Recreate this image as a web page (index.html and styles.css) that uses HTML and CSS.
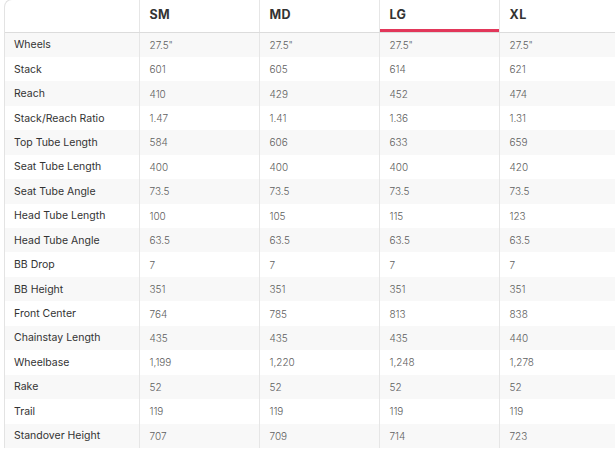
FILE: index.html
```html
<!DOCTYPE html>
<html>
<head>
<meta charset="utf-8">
<link rel="stylesheet" href="styles.css">
</head>
<body>
<div class="wrap">
<table class="geo">
<colgroup>
<col class="c-label"><col class="c-size"><col class="c-size"><col class="c-size"><col class="c-size">
</colgroup>
<thead>
<tr><th></th><th>SM</th><th>MD</th><th class="active">LG</th><th>XL</th></tr>
</thead>
<tbody>
<tr><td>Wheels</td><td>27.5"</td><td>27.5"</td><td>27.5"</td><td>27.5"</td></tr>
<tr><td>Stack</td><td>601</td><td>605</td><td>614</td><td>621</td></tr>
<tr><td>Reach</td><td>410</td><td>429</td><td>452</td><td>474</td></tr>
<tr><td>Stack/Reach Ratio</td><td>1.47</td><td>1.41</td><td>1.36</td><td>1.31</td></tr>
<tr><td>Top Tube Length</td><td>584</td><td>606</td><td>633</td><td>659</td></tr>
<tr><td>Seat Tube Length</td><td>400</td><td>400</td><td>400</td><td>420</td></tr>
<tr><td>Seat Tube Angle</td><td>73.5</td><td>73.5</td><td>73.5</td><td>73.5</td></tr>
<tr><td>Head Tube Length</td><td>100</td><td>105</td><td>115</td><td>123</td></tr>
<tr><td>Head Tube Angle</td><td>63.5</td><td>63.5</td><td>63.5</td><td>63.5</td></tr>
<tr><td>BB Drop</td><td>7</td><td>7</td><td>7</td><td>7</td></tr>
<tr><td>BB Height</td><td>351</td><td>351</td><td>351</td><td>351</td></tr>
<tr><td>Front Center</td><td>764</td><td>785</td><td>813</td><td>838</td></tr>
<tr><td>Chainstay Length</td><td>435</td><td>435</td><td>435</td><td>440</td></tr>
<tr><td>Wheelbase</td><td>1,199</td><td>1,220</td><td>1,248</td><td>1,278</td></tr>
<tr><td>Rake</td><td>52</td><td>52</td><td>52</td><td>52</td></tr>
<tr><td>Trail</td><td>119</td><td>119</td><td>119</td><td>119</td></tr>
<tr><td>Standover Height</td><td>707</td><td>709</td><td>714</td><td>723</td></tr>
</tbody>
</table>
</div>
</body>
</html>
```
FILE: styles.css
```css
html, body {
  margin: 0;
  padding: 0;
  overflow: hidden;
  background: #fff;
}
.wrap {
  margin: -1px 0 0 4px;
  width: 640px;
  border-left: 1px solid #e3e3e3;
  border-top: 1px solid #e3e3e3;
  border-top-left-radius: 8px;
  overflow: hidden;
}
.geo {
  border-collapse: collapse;
  table-layout: fixed;
  width: 614px;
  font-family: Inter, "Open Sans", sans-serif;
}
.c-label { width: 134px; }
.c-size { width: 120px; }
.geo th {
  height: 32px;
  padding: 0 10px 2px 10px;
  box-sizing: border-box;
  text-align: left;
  font-size: 12.5px;
  font-weight: 700;
  color: #333;
  border-bottom: 1px solid #dcdcdc;
  border-right: 1px solid #e6e6e6;
  letter-spacing: 0.4px;
}
.geo th.active {
  box-shadow: inset 0 -3px 0 #e2375a;
}
.geo td {
  height: 24.44px;
  padding: 0 10px;
  font-size: 10px;
  font-weight: 300;
  color: #606060;
  border-right: 1px solid #e6e6e6;
  white-space: nowrap;
}
.geo td:first-child {
  font-size: 10.5px;
  font-weight: 400;
  color: #333;
  padding-left: 9px;
}
.geo tbody tr:nth-child(odd) td {
  background: #f8f8f8;
}
```
